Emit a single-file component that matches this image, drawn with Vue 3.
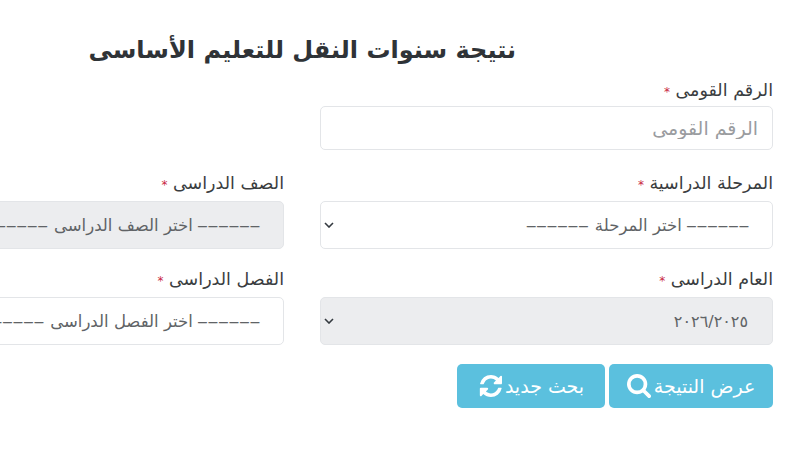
<script setup>
const rows = [
  [
    { label: 'المرحلة الدراسية', value: 'اختر المرحلة', dashed: true, disabled: false },
    { label: 'الصف الدراسى', value: 'اختر الصف الدراسى', dashed: true, disabled: true },
  ],
  [
    { label: 'العام الدراسى', value: '٢٠٢٦/٢٠٢٥', dashed: false, disabled: true },
    { label: 'الفصل الدراسى', value: 'اختر الفصل الدراسى', dashed: true, disabled: false },
  ],
]
</script>

<template>
  <main class="page" dir="rtl">
    <h1 class="title">نتيجة سنوات النقل للتعليم الأساسى</h1>

    <div class="field national">
      <label class="label">الرقم القومى <span class="req">*</span></label>
      <input class="control" type="text" placeholder="الرقم القومى" />
    </div>

    <div v-for="(row, i) in rows" :key="i" class="row">
      <div v-for="f in row" :key="f.label" class="field">
        <label class="label">{{ f.label }} <span class="req">*</span></label>
        <div class="select" :class="{ off: f.disabled }">
          <span class="value" :class="{ year: !f.dashed }">
            <span v-if="f.dashed" class="dashes">––––––</span>
            {{ f.value }}
            <span v-if="f.dashed" class="dashes">––––––</span>
          </span>
          <svg class="chev" viewBox="0 0 10 6" width="10" height="6" aria-hidden="true">
            <path d="M1 1l4 4 4-4" fill="none" stroke="#343a40" stroke-width="1.6" />
          </svg>
        </div>
      </div>
    </div>

    <div class="actions">
      <button class="btn first" type="button">
        <span>عرض النتيجة</span>
        <svg class="ico" viewBox="0 0 1664 1664" aria-hidden="true">
          <path fill="#fff" d="M1152 704q0-185-131.500-316.500t-316.500-131.500-316.500 131.500-131.500 316.500 131.500 316.500 316.500 131.500 316.500-131.500 131.500-316.500zm512 832q0 52-38 90t-90 38q-54 0-90-38l-343-342q-179 124-399 124-143 0-273.500-55.500t-225-150-150-225-55.500-273.500 55.500-273.500 150-225 225-150 273.500-55.500 273.500 55.500 225 150 150 225 55.500 273.500q0 220-124 399l343 343q37 37 37 90z" />
        </svg>
      </button>
      <button class="btn second" type="button">
        <span>بحث جديد</span>
        <svg class="ico" viewBox="0 128 1664 1536" aria-hidden="true">
          <path fill="#fff" d="M1639 1056q0 5-1 7-64 268-268 434.500t-478 166.500q-146 0-282.500-55t-243.500-157l-129 129q-19 19-45 19t-45-19-19-45v-448q0-26 19-45t45-19h448q26 0 45 19t19 45-19 45l-137 137q71 66 161 102t187 36q134 0 250-65t186-179q11-17 53-117 8-23 30-23h192q13 0 22.500 9.500t9.500 22.500zm25-800v448q0 26-19 45t-45 19h-448q-26 0-45-19t-19-45 19-45l138-138q-148-137-349-137-134 0-250 65t-186 179q-11 17-53 117-8 23-30 23h-199q-13 0-22.500-9.500t-9.500-22.500v-7q65-268 270-434.500t480-166.500q146 0 284 55.500t245 156.500l130-129q19-19 45-19t45 19 19 45z" />
        </svg>
      </button>
    </div>
  </main>
</template>

<style scoped>
.page {
  width: 800px;
  height: 450px;
  box-sizing: border-box;
  padding: 32px 27px 0 0;
  overflow: hidden;
  background: #fff;
  color: #3a3d40;
  font-family: "DejaVu Sans", "Noto Sans", sans-serif;
}
.title {
  margin: 0 257px 13px 0;
  font-size: 24px;
  line-height: 36px;
  font-weight: 700;
  white-space: nowrap;
  color: #2f3337;
}
.field {
  width: 453px;
  flex: none;
  display: flex;
  flex-direction: column;
}
.label {
  height: 18px;
  line-height: 18px;
  font-size: 17.5px;
  margin-bottom: 9px;
  white-space: nowrap;
}
.national .label {
  margin-bottom: 7px;
}
.req {
  color: #c9283f;
  font-size: 12px;
}
.control {
  box-sizing: border-box;
  width: 100%;
  height: 44px;
  padding: 0 14px;
  border: 1px solid #e3e5e8;
  border-radius: 5px;
  background: #fff;
  font: 19px "DejaVu Sans", "Noto Sans", sans-serif;
  outline: none;
}
.control::placeholder {
  color: #9a9c9f;
}
.row {
  display: flex;
  gap: 36px;
  margin-top: 24px;
}
.row + .row {
  margin-top: 21px;
}
.select {
  box-sizing: border-box;
  height: 48px;
  padding: 0 24px 0 3px;
  display: flex;
  align-items: center;
  justify-content: space-between;
  border: 1px solid #e3e5e8;
  border-radius: 5px;
  background: #fff;
  font-size: 16.5px;
  color: #606366;
  white-space: nowrap;
}
.select.off {
  background: #ecedef;
}
.year {
  font-size: 16px;
}
.dashes {
  display: inline-block;
  font-family: "Liberation Sans", sans-serif;
  font-size: 16px;
  letter-spacing: 1.6px;
}
.dashes:first-child {
  margin-right: -2px;
}
.chev {
  flex: none;
}
.actions {
  display: flex;
  gap: 4px;
  margin-top: 19px;
}
.btn {
  height: 44px;
  border: 0;
  border-radius: 5px;
  background: #5bc0de;
  color: #fff;
  font: 19px "DejaVu Sans", "Noto Sans", sans-serif;
  display: flex;
  align-items: center;
  justify-content: center;
  gap: 3px;
  padding: 0;
}
.first {
  width: 164px;
}
.second {
  width: 148px;
}
.ico {
  width: 24px;
  height: 24px;
  flex: none;
}
</style>
